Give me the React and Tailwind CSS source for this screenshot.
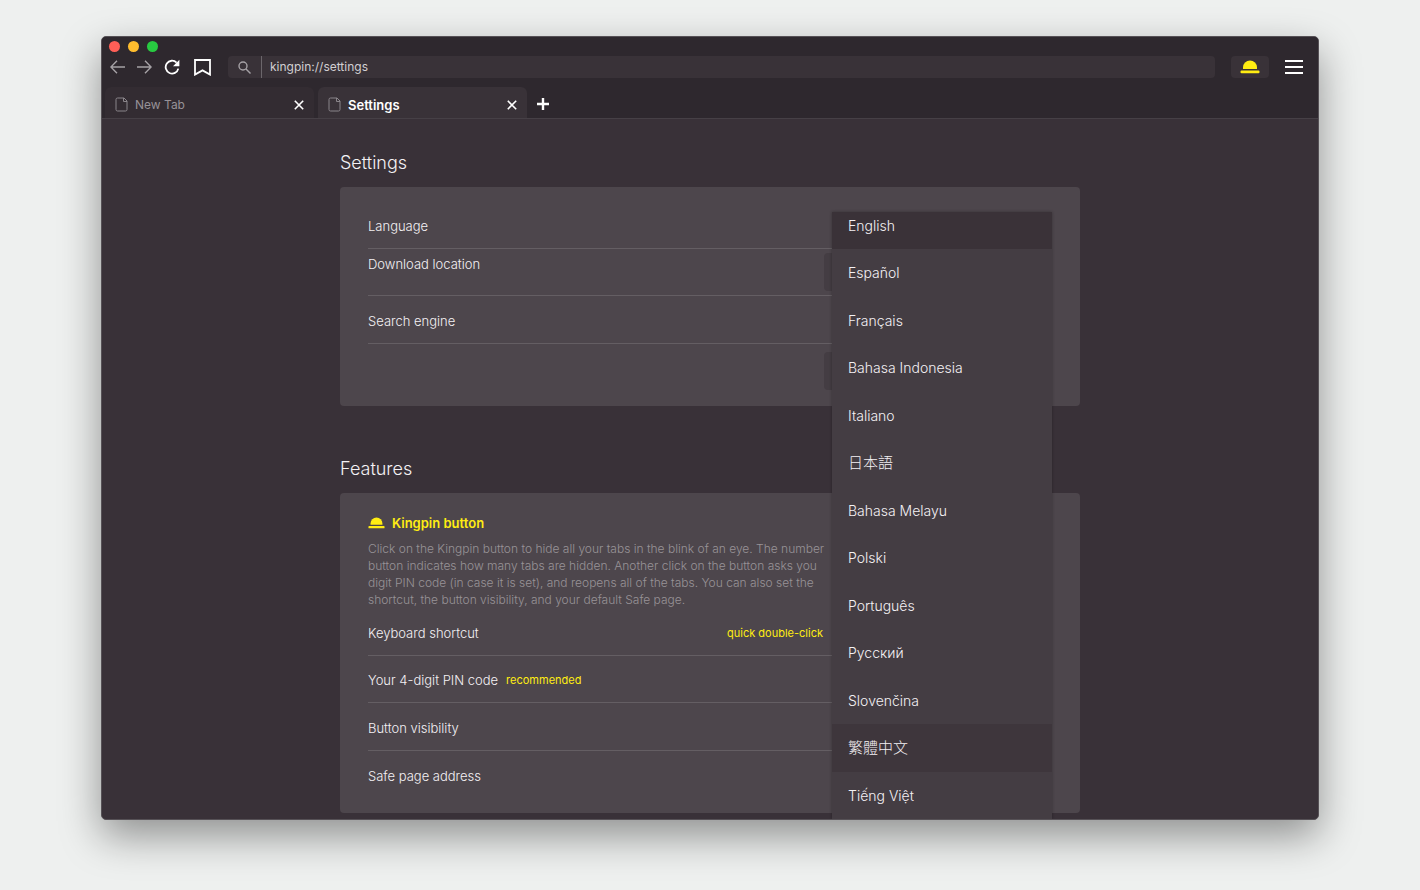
import React, { useState } from "react";

const languages = [
  { name: "Español" },
  { name: "Français" },
  { name: "Bahasa Indonesia" },
  { name: "Italiano" },
  { name: "日本語", cjk: true },
  { name: "Bahasa Melayu" },
  { name: "Polski" },
  { name: "Português" },
  { name: "Русский" },
  { name: "Slovenčina" },
  { name: "繁體中文", cjk: true, hovered: true },
  { name: "Tiếng Việt" },
];

const HatIcon = ({ className }) => (
  <svg viewBox="0 0 20 14" className={className} fill="currentColor" aria-hidden="true">
    <path d="M3 9V7.500a7 7 0 0 1 14 0V9z" />
    <rect x="0.5" y="10.500" width="19" height="2.800" rx="1" />
  </svg>
);

const PageIcon = () => (
  <svg viewBox="0 0 13 15" className="w-[13px] h-[15px] text-[#8a858a]" fill="none" stroke="currentColor" aria-hidden="true">
    <path d="M2.5 1H9l3 3v8.5a1.5 1.5 0 0 1-1.500 1.500h-8A1.500 1.500 0 0 1 1 12.500v-10A1.500 1.500 0 0 1 2.500 1z" />
    <path d="M8.500 1v3.500H12" />
  </svg>
);

const CloseIcon = () => (
  <svg viewBox="0 0 10 10" className="size-[10px]" fill="none" stroke="currentColor" strokeWidth="1.6" aria-hidden="true">
    <path d="M.8.8l8.400 8.400M9.200.8L.8 9.200" />
  </svg>
);

const Tab = ({ title, active, onSelect }) => (
  <div
    className={`flex items-center h-[31px] w-[209px] px-[10px] rounded-t-md ${
      active ? "bg-[#393238]" : "bg-[#332c32]"
    }`}
  >
    <button
      onClick={onSelect}
      className={`flex flex-1 items-center gap-[7px] pt-1 leading-5 text-left ${
        active ? "text-[13px] font-semibold text-white" : "text-xs text-[#979297]"
      }`}
    >
      <PageIcon />
      {title}
    </button>
    <button aria-label={`Close ${title}`} className="pt-1 text-white">
      <CloseIcon />
    </button>
  </div>
);

const Toolbar = () => (
  <div className="flex items-center h-[22px] pl-2 pr-[15px]">
    <div className="flex items-center gap-3">
      <button aria-label="Back" className="text-[#a5a1a5]">
        <svg viewBox="0 0 15 14" className="w-[15px] h-[14px]" fill="none" stroke="currentColor" strokeWidth="1.4">
          <path d="M7 .7L.9 7 7 13.300M1 7h14" />
        </svg>
      </button>
      <button aria-label="Forward" className="text-[#a5a1a5]">
        <svg viewBox="0 0 15 14" className="w-[15px] h-[14px]" fill="none" stroke="currentColor" strokeWidth="1.4">
          <path d="M8 .7L14.100 7 8 13.300M14 7H0" />
        </svg>
      </button>
      <button aria-label="Reload" className="text-white">
        <svg viewBox="0 0 16 16" className="size-4" fill="none" stroke="currentColor" strokeWidth="1.8">
          <path d="M12.600 3.600A6.400 6.400 0 1 0 14.300 9.600" />
          <path d="M15.400.8v6.400H9z" fill="currentColor" stroke="none" />
        </svg>
      </button>
      <button aria-label="Bookmark" className="pl-[2px] text-white">
        <svg viewBox="0 0 17 17" className="size-[17px]" fill="none" stroke="currentColor" strokeWidth="1.8">
          <path d="M1 1h15v14.600L8.500 11.400 1 15.600z" />
        </svg>
      </button>
    </div>
    <label className="flex flex-1 items-center h-[22px] ml-[17px] rounded bg-[#393238]">
      <svg viewBox="0 0 13 13" className="size-[13px] mx-[10px] text-[#a5a1a5]" fill="none" stroke="currentColor" strokeWidth="1.4" aria-hidden="true">
        <circle cx="5" cy="5" r="4" />
        <path d="M8 8l4.500 4.500" />
      </svg>
      <input
        aria-label="Address"
        defaultValue="kingpin://settings"
        className="flex-1 h-[22px] border-l border-[#6b666b] pl-2 pb-px text-xs text-[#d2cfd2] outline-none"
      />
    </label>
    <button aria-label="Kingpin button" className="flex items-center justify-center w-[38px] h-[22px] ml-4 rounded bg-[#393238] text-[#ffed12]">
      <HatIcon className="w-5 h-[14px]" />
    </button>
    <button aria-label="Menu" className="flex flex-col gap-1 w-[18px] ml-4">
      <span className="h-0.5 w-full bg-white" />
      <span className="h-0.5 w-full bg-white" />
      <span className="h-0.5 w-full bg-white" />
    </button>
  </div>
);

const LanguageMenu = ({ onSelect }) => (
  <div
    role="listbox"
    aria-label="Language"
    className="absolute top-[11px] right-0 z-10 w-[220px] text-sm leading-5 bg-[#443d43] shadow-[0_0_3px_rgba(0,0,0,0.3)]"
  >
    <button
      role="option"
      aria-selected="true"
      onClick={() => onSelect("English")}
      className="block w-full h-[37px] px-4 pb-[9px] text-left bg-[#3a3238]"
    >
      English
    </button>
    <div className="grid auto-rows-fr h-[570px]">
      {languages.map(({ name, cjk, hovered }) => (
        <button
          key={name}
          role="option"
          aria-selected="false"
          onClick={() => onSelect(name)}
          className={`px-4 pt-px text-left ${cjk ? "text-[15px]" : ""} ${hovered ? "bg-[#3e363c]" : ""}`}
        >
          {name}
        </button>
      ))}
    </div>
  </div>
);

const App = () => {
  const [tab, setTab] = useState("Settings");
  const [, setLanguage] = useState("English");

  return (
    <div className="flex h-screen px-[101px] pt-9 pb-[70px] bg-[#eef0ef] font-['Inter','Noto_Sans_CJK_TC',sans-serif]">
      <div className="flex flex-col flex-1 min-w-0 rounded-[5px] overflow-hidden border border-[#565156] bg-[#393138] shadow-[0_16px_40px_rgba(0,0,0,0.4)]">
        <header className="bg-[#2e282e] border-b border-[#464046]">
          <div className="flex gap-2 pt-1 pl-[7px] pb-1">
            <button aria-label="Close window" className="size-[11px] rounded-full bg-[#ff5f57]" />
            <button aria-label="Minimize window" className="size-[11px] rounded-full bg-[#ffbd2e]" />
            <button aria-label="Zoom window" className="size-[11px] rounded-full bg-[#28ca41]" />
          </div>
          <Toolbar />
          <div className="flex gap-1 pt-[9px] pl-[3px]">
            <Tab title="New Tab" active={tab === "New Tab"} onSelect={() => setTab("New Tab")} />
            <Tab title="Settings" active={tab === "Settings"} onSelect={() => setTab("Settings")} />
            <button aria-label="Open new tab" className="pl-[6px] pt-[2px] text-white">
              <svg viewBox="0 0 12 12" className="size-3" fill="none" stroke="currentColor" strokeWidth="2.4">
                <path d="M6 0v12M0 6h12" />
              </svg>
            </button>
          </div>
        </header>

        <main className="flex-1 min-h-0 overflow-y-auto [scrollbar-width:none] text-[13px] leading-5 font-light text-[#f4f1f4]">
          <div className="relative max-w-[740px] mx-auto">
            <h1 className="pt-8 pb-3 text-lg leading-6">Settings</h1>
            <section className="px-7 pt-[14px] pb-4 rounded bg-[#4d464c]">
              <div className="grid auto-rows-fr h-[143px]">
                <div className="relative flex items-center pt-1 border-b border-[#645e63]">
                  Language
                  <LanguageMenu onSelect={setLanguage} />
                </div>
                <div className="flex items-start justify-between pt-1 border-b border-[#645e63]">
                  <span className="pt-px">Download location</span>
                  <button aria-label="Change download location" className="w-[228px] h-[38px] rounded bg-[#443d43]" />
                </div>
                <div className="flex items-center pt-[3px] border-b border-[#645e63]">Search engine</div>
              </div>
              <div className="flex justify-end pt-2">
                <button aria-label="Set as default browser" className="w-[228px] h-[38px] rounded bg-[#443d43]" />
              </div>
            </section>

            <h2 className="pt-[51px] pb-3 text-lg leading-6">Features</h2>
            <section className="px-7 pt-5 pb-[15px] rounded bg-[#4d464c]">
              <h3 className="flex items-center gap-[7px] font-semibold text-[#ffed12]">
                <HatIcon className="w-[17px] h-3" />
                Kingpin button
              </h3>
              <p className="pt-[7px] text-xs leading-[17px] whitespace-nowrap text-[#989397]">
                Click on the Kingpin button to hide all your tabs in the blink of an eye. The number
                <br />
                button indicates how many tabs are hidden. Another click on the button asks you
                <br />
                digit PIN code (in case it is set), and reopens all of the tabs. You can also set the
                <br />
                shortcut, the button visibility, and your default Safe page.
              </p>
              <div className="grid auto-rows-fr h-[190px]">
                <div className="flex items-center justify-between pt-[3px] pr-[229px] border-b border-[#645e63]">
                  Keyboard shortcut
                  <span className="text-[11px] font-normal text-[#ffed12]">quick double-click</span>
                </div>
                <div className="flex items-center gap-2 pt-[3px] border-b border-[#645e63]">
                  Your 4-digit PIN code
                  <span className="text-[11px] font-normal text-[#ffed12]">recommended</span>
                </div>
                <div className="flex items-center pt-[3px] border-b border-[#645e63]">Button visibility</div>
                <div className="flex items-center pt-[3px]">Safe page address</div>
              </div>
            </section>
          </div>
        </main>
      </div>
    </div>
  );
};

export default App;
